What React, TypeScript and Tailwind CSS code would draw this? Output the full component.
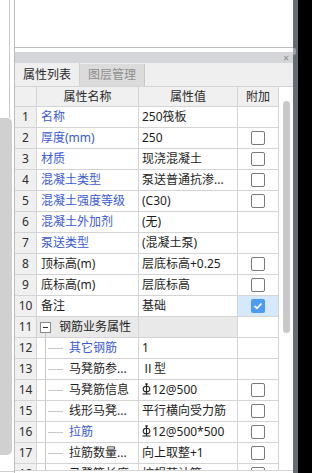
import React from "react";

type Row = {
  n: number;
  name: string;
  value: React.ReactNode;
  blue?: boolean;
  cb?: "none" | "empty" | "checked";
  group?: boolean;
  child?: boolean;
};

const Rebar = () => (
  <svg width="9" height="12" viewBox="0 0 9 12" className="inline-block mr-[1px] -mt-[2px] align-middle">
    <line x1="4.5" y1="0.5" x2="4.5" y2="11" stroke="#222" strokeWidth="1.1" />
    <ellipse cx="4.5" cy="6" rx="3.3" ry="2.8" fill="none" stroke="#222" strokeWidth="1.1" />
    <line x1="3" y1="1" x2="6" y2="1" stroke="#222" strokeWidth="1" />
    <line x1="0.5" y1="11" x2="8.5" y2="11" stroke="#222" strokeWidth="1.1" />
  </svg>
);

const rows: Row[] = [
  { n: 1, name: "名称", value: "250筏板", blue: true, cb: "none" },
  { n: 2, name: "厚度(mm)", value: "250", blue: true, cb: "empty" },
  { n: 3, name: "材质", value: "现浇混凝土", blue: true, cb: "empty" },
  { n: 4, name: "混凝土类型", value: "泵送普通抗渗...", blue: true, cb: "empty" },
  { n: 5, name: "混凝土强度等级", value: "(C30)", blue: true, cb: "empty" },
  { n: 6, name: "混凝土外加剂", value: "(无)", blue: true, cb: "none" },
  { n: 7, name: "泵送类型", value: "(混凝土泵)", blue: true, cb: "none" },
  { n: 8, name: "顶标高(m)", value: "层底标高+0.25", cb: "empty" },
  { n: 9, name: "底标高(m)", value: "层底标高", cb: "empty" },
  { n: 10, name: "备注", value: "基础", cb: "checked" },
  { n: 11, name: "钢筋业务属性", value: "", group: true, cb: "none" },
  { n: 12, name: "其它钢筋", value: "1", blue: true, child: true, cb: "none" },
  { n: 13, name: "马凳筋参...", value: "Ⅱ型", child: true, cb: "none" },
  { n: 14, name: "马凳筋信息", value: <><Rebar />12@500</>, child: true, cb: "empty" },
  { n: 15, name: "线形马凳...", value: "平行横向受力筋", child: true, cb: "empty" },
  { n: 16, name: "拉筋", value: <><Rebar />12@500*500</>, blue: true, child: true, cb: "empty" },
  { n: 17, name: "拉筋数量...", value: "向上取整+1", child: true, cb: "empty" },
  { n: 18, name: "马凳筋长度", value: "按规范计算", child: true, cb: "empty" },
];

const CheckBox = ({ checked }: { checked?: boolean }) =>
  checked ? (
    <div className="w-[14px] h-[14px] rounded-[2px] bg-[#4b9cf2] flex items-center justify-center">
      <svg width="10" height="8" viewBox="0 0 10 8">
        <path d="M1.5 4 L4 6.3 L8.5 1.5" fill="none" stroke="#fff" strokeWidth="1.8" />
      </svg>
    </div>
  ) : (
    <div className="w-[14px] h-[14px] rounded-[2px] border border-[#7a7a7a] bg-white" />
  );

export default function App() {
  return (
    <div
      className="w-[312px] h-[473px] overflow-hidden bg-white flex text-[12px] text-[#1e1e1e]"
      style={{ fontFamily: '"Noto Sans", "Noto Sans CJK SC", sans-serif' }}
    >
      {/* left strip */}
      <div className="w-[14px] shrink-0 flex flex-col">
        <div className="h-[118px] w-[10px] border-r border-[#c9c9c9]" />
        <div className="h-[337px] w-[12px] rounded-r-[5px] bg-[#d0d0d0]" />
        <div className="h-[16px]" />
        <div className="border-t border-[#cfcfcf]" />
      </div>

      {/* middle */}
      <div className="w-[279px] shrink-0 flex flex-col border-l border-[#bcbcbc]">
        <div className="h-[48px] border-b border-[#bdbdbd] bg-white" />
        <div className="h-[4px] bg-white" />
        <div className="h-[11px] bg-[#d5d6d9] flex items-center justify-end pr-[4px]">
          <span className="text-[10px] leading-none text-[#8a8a8a]">×</span>
        </div>
        <div className="h-[23px] bg-[#efefef] flex">
          <div className="w-[65px] flex items-center justify-center text-[#2a2a2a] border-r border-[#d0d0d0]">
            属性列表
          </div>
          <div className="w-[65px] flex items-center justify-center text-[#8e8e8e] bg-[#dbdbdb] border-r border-[#c8c8c8] mt-[1px]">
            图层管理
          </div>
        </div>
        <div className="h-[385px] flex border-t border-b border-[#d4d4d4] overflow-hidden">
          <div className="w-[264px] flex flex-col">
            {/* header */}
            <div className="flex h-[20px] shrink-0 border-b border-[#d4d4d4] bg-[#f0f0f0] text-[#2a2a2a]">
              <div className="w-[22px] border-r border-[#d4d4d4]" />
              <div className="w-[102px] border-r border-[#d4d4d4] flex items-center justify-center">属性名称</div>
              <div className="w-[99px] border-r border-[#d4d4d4] flex items-center justify-center">属性值</div>
              <div className="w-[41px] border-r border-[#d4d4d4] flex items-center justify-center">附加</div>
            </div>
            {rows.map((r) => (
              <div key={r.n} className="flex h-[21px] shrink-0 border-b border-[#d4d4d4]">
                <div className="w-[22px] border-r border-[#d4d4d4] bg-[#f0f0f0] flex items-center justify-center text-[#2e2e2e]">
                  {r.n}
                </div>
                <div
                  className={`w-[102px] border-r border-[#d4d4d4] flex items-center relative whitespace-nowrap overflow-hidden ${
                    r.group ? "bg-[#e9e9e9]" : ""
                  }`}
                >
                  {r.group ? (
                    <>
                      <div className="ml-[3px] w-[11px] h-[11px] border border-[#8a8a8a] bg-white flex items-center justify-center">
                        <div className="w-[5px] h-[1px] bg-[#333]" />
                      </div>
                      <span className="ml-[8px]">{r.name}</span>
                      <div className="absolute left-[8px] top-[16px] bottom-0 border-l border-[#c8c8c8]" />
                    </>
                  ) : r.child ? (
                    <>
                      <div className="absolute left-[8px] top-0 bottom-0 border-l border-[#c8c8c8]" />
                      <div className="ml-[11px] w-[15px] border-t border-[#c8c8c8]" />
                      <span className={`ml-[6px] ${r.blue ? "text-[#3a5ad6]" : ""}`}>{r.name}</span>
                    </>
                  ) : (
                    <span className={`ml-[4px] ${r.blue ? "text-[#3a5ad6]" : ""}`}>{r.name}</span>
                  )}
                </div>
                <div
                  className={`w-[99px] border-r border-[#d4d4d4] flex items-center pl-[3px] whitespace-nowrap overflow-hidden ${
                    r.group ? "bg-[#e9e9e9]" : ""
                  }`}
                >
                  {r.value}
                </div>
                <div
                  className={`w-[41px] border-r border-[#d4d4d4] flex items-center justify-center ${
                    r.cb === "checked" ? "bg-[#d6e9fc]" : ""
                  }`}
                >
                  {r.cb === "empty" && <CheckBox />}
                  {r.cb === "checked" && <CheckBox checked />}
                </div>
              </div>
            ))}
          </div>
          <div className="w-[15px] bg-white pt-[14px] pl-[4px]">
            <div className="w-[7px] h-[232px] rounded-full bg-[#c9c9c9]" />
          </div>
        </div>
        <div className="flex-1 bg-white" />
      </div>

      {/* dark strip */}
      <div className="w-[5px] shrink-0 bg-[#666c74] flex flex-col">
        <div className="h-[48px]" />
        <div className="w-[3px] h-[7px] bg-[#9aa0a8] rounded-r-[2px]" />
      </div>
      <div className="flex-1 bg-black" />
    </div>
  );
}
